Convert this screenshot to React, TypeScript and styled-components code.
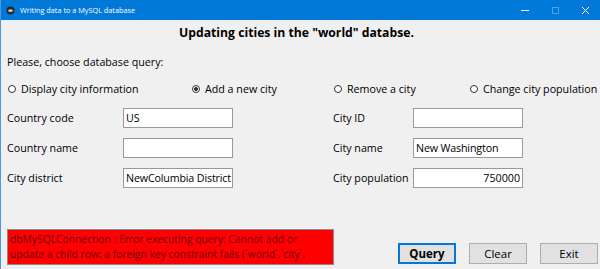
import React, { FC } from 'react'
import styled, { createGlobalStyle } from 'styled-components'

const GlobalStyle = createGlobalStyle`
  html, body {
    margin: 0;
    padding: 0;
    background: #f0f0f0;
  }
  body {
    font-family: 'Open Sans', 'Noto Sans', sans-serif;
    font-size: 10.7px;
    color: #000;
  }
`

interface FieldProps {
  label: string
  value: string
  labelWidth: number
  right?: boolean
}

const Field: FC<FieldProps> = ({ label, value, labelWidth, right }) => (
  <FieldRow>
    <FieldLabel $width={labelWidth}>{label}</FieldLabel>
    <TextBox $right={right}>{value}</TextBox>
  </FieldRow>
)

const queries = [
  { label: 'Display city information', checked: false },
  { label: 'Add a new city', checked: true },
  { label: 'Remove a city', checked: false },
  { label: 'Change city population', checked: false }
]

const App: FC = () => {
  return (
    <Window>
      <GlobalStyle />
      <TitleBar>
        <AppIcon viewBox="0 0 10 10">
          <circle cx="5" cy="5" r="4.5" fill="#2b2b2b" />
          <path d="M2.2 5.2 C3 3.3 7 3.3 7.8 5.2 L6.6 6.4 L3.4 6.4 Z" fill="#d8d8d8" />
        </AppIcon>
        <WindowTitle>Writing data to a MySQL database</WindowTitle>
        <Controls>
          <ControlButton>
            <svg width="8" height="8" viewBox="0 0 8 8">
              <line x1="0" y1="4.5" x2="8" y2="4.5" stroke="#fff" strokeWidth="1" />
            </svg>
          </ControlButton>
          <ControlButton $dim>
            <svg width="7" height="7" viewBox="0 0 7 7">
              <rect x="0.5" y="0.5" width="6" height="6" fill="none" stroke="#fff" strokeWidth="1" />
            </svg>
          </ControlButton>
          <ControlButton>
            <svg width="7" height="7" viewBox="0 0 7 7">
              <path d="M0 0 L7 7 M7 0 L0 7" stroke="#fff" strokeWidth="1" />
            </svg>
          </ControlButton>
        </Controls>
      </TitleBar>
      <Body>
        <Heading>Updating cities in the "world" databse.</Heading>
        <Prompt>Please, choose database query:</Prompt>
        <RadioRow>
          {queries.map(q => (
            <Radio key={q.label}>
              <RadioDot $checked={q.checked} />
              {q.label}
            </Radio>
          ))}
        </RadioRow>
        <Fields>
          <Field label="Country code" value="US" labelWidth={116} />
          <Field label="City ID" value="" labelWidth={80} />
          <Field label="Country name" value="" labelWidth={116} />
          <Field label="City name" value="New Washington" labelWidth={80} />
          <Field label="City district" value="NewColumbia District" labelWidth={116} />
          <Field label="City population" value="750000" labelWidth={80} right />
        </Fields>
        <Footer>
          <ErrorBox>
            <ErrorLine>dbMySQLConnection : Error executing query: Cannot add or</ErrorLine>
            <ErrorLine>update a child row: a foreign key constraint fails (`world`.`city`,</ErrorLine>
          </ErrorBox>
          <Buttons>
            <Button $default>Query</Button>
            <Button>Clear</Button>
            <Button>Exit</Button>
          </Buttons>
        </Footer>
      </Body>
    </Window>
  )
}

const Window = styled.div`
  width: 600px;
  height: 269px;
  box-sizing: border-box;
  border-left: 1px solid #4a9be0;
  display: flex;
  flex-direction: column;
  background: #f0f0f0;
  overflow: hidden;
`

const TitleBar = styled.div`
  height: 20px;
  flex: none;
  background: #0078d7;
  display: flex;
  align-items: center;
  padding-left: 5px;
  color: #fff;
`

const AppIcon = styled.svg`
  width: 9px;
  height: 9px;
  margin-right: 5px;
`

const WindowTitle = styled.span`
  font-size: 7.3px;
  flex: 1;
`

const Controls = styled.div`
  display: flex;
  height: 100%;
`

const ControlButton = styled.div<{ $dim?: boolean }>`
  width: 30px;
  display: flex;
  align-items: center;
  justify-content: center;
  opacity: ${p => (p.$dim ? 0.3 : 1)};
`

const Body = styled.div`
  flex: 1;
  display: flex;
  flex-direction: column;
  padding: 0 2px 0 6px;
`

const Heading = styled.div`
  font-weight: bold;
  font-size: 12.2px;
  text-align: center;
  padding-right: 12px;
  margin-top: 4px;
  height: 18px;
  line-height: 18px;
`

const Prompt = styled.div`
  margin-top: 11px;
  height: 18px;
  line-height: 18px;
`

const RadioRow = styled.div`
  display: grid;
  grid-template-columns: 184px 142px 136px auto;
  margin-top: 9px;
  height: 18px;
  align-items: center;
  padding-left: 1px;
`

const Radio = styled.div`
  display: flex;
  align-items: center;
  white-space: nowrap;
`

const RadioDot = styled.span<{ $checked?: boolean }>`
  width: 6px;
  height: 6px;
  border: 1px solid #333;
  border-radius: 50%;
  margin-right: 5px;
  background: ${p => (p.$checked ? 'radial-gradient(circle, #333 0 1.6px, #fff 2.2px)' : '#fff')};
`

const Fields = styled.div`
  display: grid;
  grid-template-columns: 326px auto;
  row-gap: 10px;
  margin-top: 10px;
`

const FieldRow = styled.div`
  display: flex;
  align-items: center;
  height: 20px;
`

const FieldLabel = styled.span<{ $width: number }>`
  width: ${p => p.$width}px;
  flex: none;
  white-space: nowrap;
`

const TextBox = styled.div<{ $right?: boolean }>`
  width: 110px;
  height: 20px;
  box-sizing: border-box;
  border: 1px solid #999;
  background: #fff;
  padding: 0 2px;
  line-height: 18px;
  letter-spacing: ${p => (p.$right ? '0' : '-0.15px')};
  text-align: ${p => (p.$right ? 'right' : 'left')};
  white-space: nowrap;
  overflow: hidden;
`

const Footer = styled.div`
  margin-top: auto;
  margin-bottom: 4px;
  display: flex;
  align-items: flex-end;
  justify-content: space-between;
`

const ErrorBox = styled.div`
  width: 327px;
  height: 36px;
  box-sizing: border-box;
  background: #ff0000;
  border: 1px solid #8c8c8c;
  color: #6e0000;
  font-size: 10.3px;
  line-height: 15px;
  padding: 2px 2px;
  overflow: hidden;
`

const ErrorLine = styled.div`
  white-space: nowrap;
`

const Buttons = styled.div`
  display: flex;
  gap: 13px;
  margin-bottom: 1px;
`

const Button = styled.div<{ $default?: boolean }>`
  width: 58px;
  height: 21px;
  box-sizing: border-box;
  display: flex;
  align-items: center;
  justify-content: center;
  background: #e1e1e1;
  border: ${p => (p.$default ? '2px solid #0078d7' : '1px solid #adadad')};
  font-weight: ${p => (p.$default ? 'bold' : 'normal')};
  font-size: 11.5px;
`

export default App
